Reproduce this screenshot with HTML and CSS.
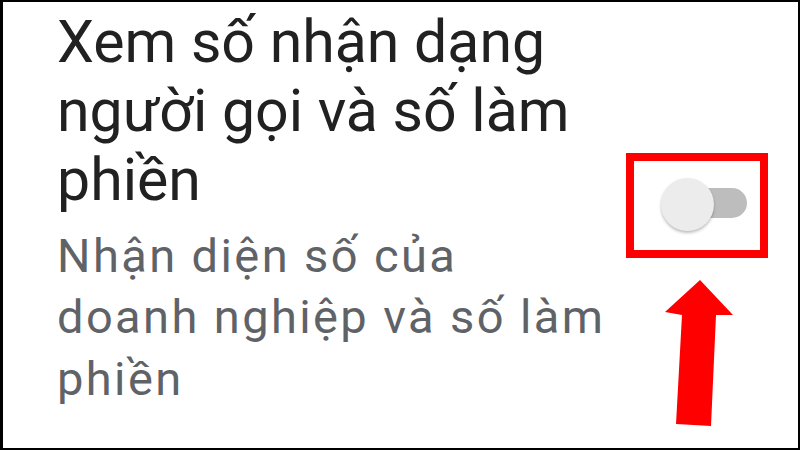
FILE: index.html
```html
<!DOCTYPE html>
<html lang="vi">
<head>
<meta charset="utf-8">
<link rel="stylesheet" href="styles.css">
</head>
<body>
<div class="frame">
  <div class="text">
    <div class="title">Xem số nhận dạng<br>người gọi và số làm<br>phiền</div>
    <div class="subtitle">Nhận diện số của<br>doanh nghiệp và số làm<br>phiền</div>
  </div>
  <div class="switch-col">
    <div class="switch">
      <div class="track"></div>
      <div class="thumb"></div>
    </div>
  </div>
  <div class="highlight"></div>
  <svg class="arrow" width="80" height="160" viewBox="0 0 80 160">
    <polygon points="40,0 73,35 56,35 51,146 16,144 22,35 5,32" fill="#ff0000"/>
  </svg>
</div>
</body>
</html>
```

FILE: styles.css
```css
html, body {
  margin: 0;
  padding: 0;
  background: #ffffff;
}
.frame {
  position: relative;
  width: 800px;
  height: 450px;
  box-sizing: border-box;
  border-style: solid;
  border-color: #000000;
  border-width: 2px 2px 2px 3px;
  background: #ffffff;
  display: flex;
  overflow: hidden;
  font-family: Roboto, "Noto Sans", sans-serif;
}
.text {
  flex: none;
  width: 600px;
  box-sizing: border-box;
  padding: 5px 0 0 54px;
  white-space: nowrap;
}
.title {
  font-size: 59px;
  line-height: 69px;
  color: #212121;
}
.subtitle {
  margin-top: 10.9px;
  font-size: 47px;
  line-height: 61.5px;
  letter-spacing: 2.4px;
  color: #5f6368;
}
.switch-col {
  flex: 1;
  padding-top: 176px;
  padding-left: 58px;
}
.switch {
  position: relative;
  width: 88px;
  height: 54px;
}
.track {
  position: absolute;
  left: 20px;
  top: 10px;
  width: 66px;
  height: 30px;
  border-radius: 15px;
  background: #bdbdbd;
}
.thumb {
  position: absolute;
  left: 0;
  top: 0;
  width: 53px;
  height: 53px;
  border-radius: 50%;
  background: #ececec;
  box-shadow: 0 2px 3px rgba(0,0,0,0.25);
}
.highlight {
  position: absolute;
  left: 623px;
  top: 151px;
  width: 142px;
  height: 105px;
  box-sizing: border-box;
  border: 8px solid #ff0000;
}
.arrow {
  position: absolute;
  left: 657px;
  top: 278px;
}
```
